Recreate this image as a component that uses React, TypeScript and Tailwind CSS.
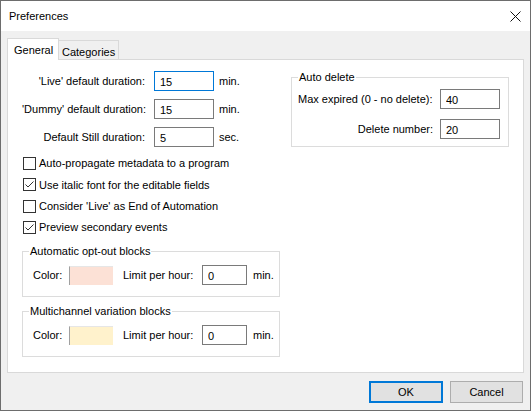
import React from "react";

function Check({ checked, label }: { checked: boolean; label: string }) {
  return (
    <div className="flex items-center h-[21.33px] gap-[2px]">
      <div className="ml-[1px] w-[13px] h-[13px] border border-[#333333] bg-white flex items-center justify-center">
        {checked && (
          <svg width="11" height="11" viewBox="0 0 11 11">
            <path d="M1.5 5.5 L4 8 L9.5 2.5" fill="none" stroke="#333333" strokeWidth="1" />
          </svg>
        )}
      </div>
      <span className="pl-[1px]">{label}</span>
    </div>
  );
}

function Box({ value, w, focused }: { value: string; w: string; focused?: boolean }) {
  return (
    <input
      readOnly
      value={value}
      className={`${w} h-[20px] bg-white border ${focused ? "border-[#0078d7]" : "border-[#7a7a7a]"} pl-[5px] pt-[1px] outline-none text-[11px]`}
    />
  );
}

function Group({ title, color }: { title: string; color: string }) {
  return (
    <fieldset className="w-[258px] border border-[#dcdcdc] pb-[11px]">
      <legend className="ml-[6px] px-[1px] leading-[13px]">{title}</legend>
      <div className="flex items-center pl-[10px] mt-[7px]">
        <span className="w-[36px]">Color:</span>
        <div className="w-[44px] h-[19px] border-l border-t border-l-[#a0a0a0] border-t-[#e6e6e6]" style={{ backgroundColor: color }} />
        <span className="ml-[10px] w-[79px]">Limit per hour:</span>
        <Box value="0" w="w-[45px]" />
        <span className="ml-[6px]">min.</span>
      </div>
    </fieldset>
  );
}

export default function App() {
  const rows = [
    { label: "'Live' default duration:", value: "15", unit: "min.", focused: true },
    { label: "'Dummy' default duration:", value: "15", unit: "min." },
    { label: "Default Still duration:", value: "5", unit: "sec." },
  ];
  return (
    <div className="w-[531px] h-[411px] border border-[#6d6d6d] bg-[#f0f0f0] flex flex-col font-['Liberation_Sans',Arial,sans-serif] text-[11px] text-black overflow-hidden">
      <div className="h-[30px] bg-white flex items-center justify-between pl-[8px] pr-[9px] shrink-0">
        <span className="pt-[1px]">Preferences</span>
        <svg width="11" height="11" viewBox="0 0 11 11">
          <path d="M0.5 0.5 L10.5 10.5 M10.5 0.5 L0.5 10.5" stroke="#111" strokeWidth="1" />
        </svg>
      </div>
      <div className="flex-1 flex flex-col px-[6px] pt-[7px] pb-[7px]">
        <div className="flex items-end h-[21px]">
          <div className="relative z-10 -mb-px w-[52px] h-[22px] bg-white border border-b-0 border-[#d9d9d9] pl-[6px] pt-[3px]">
            General
          </div>
          <div className="w-[60px] h-[19px] bg-[#f0f0f0] border-t border-r border-[#d9d9d9] pl-[3px] pt-[3px]">
            Categories
          </div>
        </div>
        <div className="h-[314px] bg-white border border-[#d9d9d9] flex pl-[14px] pt-[11px]">
          <div className="w-[258px] flex flex-col">
            <div className="flex flex-col gap-[8px]">
              {rows.map((r) => (
                <div key={r.label} className="flex items-center h-[20px]">
                  <span className="w-[123px] text-right whitespace-nowrap pt-[1px]">{r.label}</span>
                  <span className="ml-[9px]">
                    <Box value={r.value} w="w-[60px]" focused={r.focused} />
                  </span>
                  <span className="ml-[5px]">{r.unit}</span>
                </div>
              ))}
            </div>
            <div className="mt-[6px] flex flex-col">
              <Check checked={false} label="Auto-propagate metadata to a program" />
              <Check checked={true} label="Use italic font for the editable fields" />
              <Check checked={false} label="Consider 'Live' as End of Automation" />
              <Check checked={true} label="Preview secondary events" />
            </div>
            <div className="mt-[7px] flex flex-col gap-[8px]">
              <Group title="Automatic opt-out blocks" color="#fce1d6" />
              <Group title="Multichannel variation blocks" color="#fff2cc" />
            </div>
          </div>
          <div className="ml-[11px]">
            <fieldset className="w-[218px] border border-[#dcdcdc] pb-[7px]">
              <legend className="ml-[6px] px-[1px] leading-[13px]">Auto delete</legend>
              <div className="grid grid-cols-[136px_60px] gap-x-[6px] gap-y-[10px] pl-[6px] mt-[5px] items-center">
                <span className="whitespace-nowrap">Max expired (0 - no delete):</span>
                <Box value="40" w="w-[60px]" />
                <span className="text-right pr-[1px]">Delete number:</span>
                <Box value="20" w="w-[60px]" />
              </div>
            </fieldset>
          </div>
        </div>
        <div className="flex-1 flex items-end justify-end gap-[7px] pr-[1px]">
          <button className="w-[74px] h-[22px] bg-[#e1e1e1] border-2 border-[#0078d7]">OK</button>
          <button className="w-[73px] h-[22px] bg-[#e1e1e1] border border-[#adadad]">Cancel</button>
        </div>
      </div>
    </div>
  );
}
